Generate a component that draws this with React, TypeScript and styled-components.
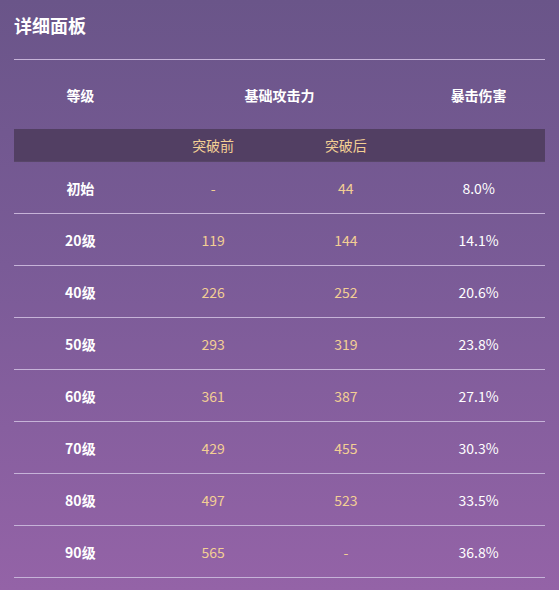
import styled, { createGlobalStyle } from 'styled-components';

const GlobalStyle = createGlobalStyle`
    html, body {
        margin: 0;
        padding: 0;
    }
    body {
        font-family: "Noto Sans CJK SC", "Noto Sans", sans-serif;
        background: #7d5c9b;
    }
`;

type Row = { level: string; before: string; after: string; crit: string };

const rows: Row[] = [
    { level: '初始', before: '-', after: '44', crit: '8.0%' },
    { level: '20级', before: '119', after: '144', crit: '14.1%' },
    { level: '40级', before: '226', after: '252', crit: '20.6%' },
    { level: '50级', before: '293', after: '319', crit: '23.8%' },
    { level: '60级', before: '361', after: '387', crit: '27.1%' },
    { level: '70级', before: '429', after: '455', crit: '30.3%' },
    { level: '80级', before: '497', after: '523', crit: '33.5%' },
    { level: '90级', before: '565', after: '-', crit: '36.8%' },
];

const Panel = styled.div`
    width: 559px;
    height: 590px;
    box-sizing: border-box;
    padding: 10px 14px 0;
    background: linear-gradient(180deg, #6a5589 0%, #7a5b97 45%, #9463a7 100%);
    overflow: hidden;
`;

const Title = styled.h2`
    margin: 0;
    height: 49px;
    line-height: 30px;
    font-size: 18px;
    font-weight: 700;
    color: #ffffff;
`;

const Table = styled.table`
    width: 531px;
    border-collapse: collapse;
    table-layout: fixed;
    border-top: 1px solid #c6b3d8;
`;

const HeadCell = styled.th`
    height: 69px;
    padding: 0;
    font-size: 14px;
    font-weight: 700;
    color: #ffffff;
    text-align: center;
`;

const SubRow = styled.tr`
    background: #523f63;
    border-bottom: 1px solid rgba(255, 255, 255, 0.04);
`;

const SubCell = styled.th`
    height: 32px;
    padding: 0;
    font-size: 14px;
    font-weight: 400;
    color: #f3cf94;
    text-align: center;
`;

const BodyRow = styled.tr`
    border-bottom: 1px solid #c6b3d8;
`;

const Cell = styled.td<{ $tone: 'level' | 'stat' | 'crit' }>`
    height: 51px;
    padding: 0;
    text-align: center;
    font-size: 14px;
    font-weight: ${(p) => (p.$tone === 'level' ? 700 : 400)};
    color: ${(p) => (p.$tone === 'stat' ? '#f3cf94' : '#ffffff')};
`;

export default function App() {
    return (
        <>
            <GlobalStyle />
            <Panel>
                <Title>详细面板</Title>
                <Table>
                    <thead>
                        <tr>
                            <HeadCell>等级</HeadCell>
                            <HeadCell colSpan={2}>基础攻击力</HeadCell>
                            <HeadCell>暴击伤害</HeadCell>
                        </tr>
                        <SubRow>
                            <SubCell />
                            <SubCell>突破前</SubCell>
                            <SubCell>突破后</SubCell>
                            <SubCell />
                        </SubRow>
                    </thead>
                    <tbody>
                        {rows.map((r) => (
                            <BodyRow key={r.level}>
                                <Cell $tone="level">{r.level}</Cell>
                                <Cell $tone="stat">{r.before}</Cell>
                                <Cell $tone="stat">{r.after}</Cell>
                                <Cell $tone="crit">{r.crit}</Cell>
                            </BodyRow>
                        ))}
                    </tbody>
                </Table>
            </Panel>
        </>
    );
}
